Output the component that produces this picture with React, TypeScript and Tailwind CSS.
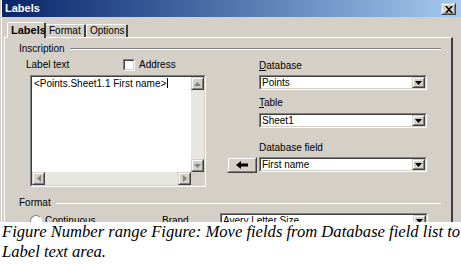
import React from "react";

const ui = { fontFamily: '"Liberation Sans", Arial, sans-serif' };

function Sunken({ className = "", children }: { className?: string; children?: React.ReactNode }) {
  return (
    <div className={`border border-t-[#808080] border-l-[#808080] border-b-white border-r-white ${className}`}>
      <div className="h-full w-full border border-t-[#404040] border-l-[#404040] border-b-[#d4d0c8] border-r-[#d4d0c8] bg-white">
        {children}
      </div>
    </div>
  );
}

function Raised({ className = "", children }: { className?: string; children?: React.ReactNode }) {
  return (
    <div className={`border border-t-[#d4d0c8] border-l-[#d4d0c8] border-b-[#404040] border-r-[#404040] bg-[#d4d0c8] ${className}`}>
      <div className="flex h-full w-full items-center justify-center border border-t-white border-l-white border-b-[#808080] border-r-[#808080]">
        {children}
      </div>
    </div>
  );
}

function DownTri() {
  return (
    <svg width="7" height="4" viewBox="0 0 7 4">
      <path d="M0 0h7L3.5 4z" fill="#000" />
    </svg>
  );
}

function Select({ value, className = "" }: { value: string; className?: string }) {
  return (
    <Sunken className={`h-[15px] ${className}`}>
      <div className="flex h-full items-center">
        <span className="flex-1 pl-[1px] text-[10px] leading-none text-black">{value}</span>
        <Raised className="h-full w-[13px]">
          <DownTri />
        </Raised>
      </div>
    </Sunken>
  );
}

function ScrollBtn({ dir }: { dir: "up" | "down" | "left" | "right" }) {
  const paths: Record<string, string> = {
    up: "M0 4h7L3.5 0z",
    down: "M0 0h7L3.5 4z",
    left: "M4 0v7L0 3.5z",
    right: "M0 0v7L4 3.5z",
  };
  const vert = dir === "up" || dir === "down";
  return (
    <Raised className={vert ? "h-[13px] w-full" : "h-full w-[13px]"}>
      <svg width={vert ? 7 : 4} height={vert ? 4 : 7} viewBox={vert ? "0 0 7 4" : "0 0 4 7"}>
        <path d={paths[dir]} fill="#808080" />
      </svg>
    </Raised>
  );
}

export default function App() {
  return (
    <div className="h-[265px] w-[461px] overflow-hidden bg-white">
      <div
        className="relative h-[222px] overflow-hidden border-l border-l-[#d4d0c8] bg-[#d4d0c8]"
        style={ui}
      >
        <div className="flex h-full flex-col border-l border-l-white">
          {/* Title bar */}
          <div className="relative flex h-[17px] shrink-0 items-center bg-gradient-to-r from-[#0a246a] to-[#a6caf0] pl-[3px]">
            <span className="text-[11px] font-bold leading-none text-white">Labels</span>
            <Raised className="absolute right-[5px] top-[3px] h-[12px] w-[15px]">
              <svg width="8" height="7" viewBox="0 0 8 7">
                <path d="M0 0h2l2 2.2L6 0h2L5 3.5 8 7H6L4 4.8 2 7H0l3-3.5z" fill="#000" />
              </svg>
            </Raised>
          </div>

          {/* Tabs */}
          <div className="flex h-[20px] shrink-0 items-end pl-[5px] pt-[5px]">
            <div className="relative z-10 -mb-px flex h-[16px] w-[39px] items-center rounded-t-[2px] border-l border-t border-r-2 border-l-white border-t-white border-r-[#404040] bg-[#d4d0c8] pl-[3px]">
              <span className="text-[11px] font-bold leading-none text-black">Labels</span>
            </div>
            <div className="flex h-[13px] w-[40px] items-center rounded-t-[2px] border-t border-r-2 border-t-white border-r-[#404040] pl-[3px]">
              <span className="text-[10px] leading-none text-black">Format</span>
            </div>
            <div className="flex h-[13px] w-[42px] items-center rounded-t-[2px] border-l border-t border-r-2 border-l-white border-t-white border-r-[#404040] pl-[3px]">
              <span className="text-[10px] leading-none text-black">Options</span>
            </div>
          </div>

          {/* Tab panel */}
          <div className="ml-[2px] mr-[8px] flex-1 border-l border-t border-r-2 border-l-white border-t-white border-r-[#404040]">
            <div className="px-[14px] pt-[6px]">
              {/* Inscription */}
              <div className="flex items-center gap-[5px]">
                <span className="text-[10px] leading-none text-black">Inscription</span>
                <div className="mr-[-4px] flex-1 border-t border-t-[#808080] border-b border-b-white" />
              </div>

              <div className="mt-[5px] flex">
                <div className="w-[198px] pl-[7px]">
                  <div className="flex h-[12px] items-center">
                    <span className="w-[97px] text-[10px] leading-none text-black">Label text</span>
                    <div className="h-[12px] w-[12px] border border-t-[#808080] border-l-[#808080] border-b-white border-r-white">
                      <div className="h-full w-full border border-t-[#404040] border-l-[#404040] border-b-[#d4d0c8] border-r-[#d4d0c8] bg-white" />
                    </div>
                    <span className="ml-[4px] text-[10px] leading-none text-black">Address</span>
                  </div>
                  <Sunken className="ml-[4px] mt-[4px] h-[112px] w-[176px]">
                    <div className="flex h-full flex-col">
                      <div className="flex flex-1">
                        <div className="flex-1 pl-[2px] pt-[1px] text-[10px] leading-[12px]">
                          <span className="text-black">&lt;Points.Sheet1.1 First name&gt;</span>
                          <span className="ml-[1px] inline-block h-[10px] w-px bg-black align-[-1px]" />
                        </div>
                        <div className="flex w-[13px] flex-col bg-[#e8e6e1]">
                          <ScrollBtn dir="up" />
                          <div className="flex-1" />
                          <ScrollBtn dir="down" />
                        </div>
                      </div>
                      <div className="flex h-[13px] bg-[#d4d0c8]">
                        <div className="flex flex-1 bg-[#e8e6e1]">
                          <ScrollBtn dir="left" />
                          <div className="flex-1" />
                          <ScrollBtn dir="right" />
                        </div>
                        <div className="w-[13px] bg-[#d4d0c8]" />
                      </div>
                    </div>
                  </Sunken>
                </div>

                <div className="flex w-[41px] flex-col justify-end pb-[14px]">
                  <Raised className="ml-[10px] h-[16px] w-[30px]">
                    <svg width="12" height="8" viewBox="0 0 12 8">
                      <path d="M0 4L5 0v2.5h7v3H5V8z" fill="#000" />
                    </svg>
                  </Raised>
                </div>

                <div className="flex w-[170px] flex-col pl-[1px]">
                  <span className="mt-[2px] text-[10px] leading-none text-black">
                    <span className="underline">D</span>atabase
                  </span>
                  <Select value="Points" className="mt-[4px] w-[168px]" />
                  <span className="mt-[8px] text-[10px] leading-none text-black">
                    <span className="underline">T</span>able
                  </span>
                  <Select value="Sheet1" className="mt-[5px] w-[168px]" />
                  <span className="mt-[15px] text-[10px] leading-none text-black">Database field</span>
                  <Select value="First name" className="mt-[4px] w-[168px]" />
                </div>
              </div>

              {/* Format */}
              <div className="mt-[11px] flex items-center gap-[5px]">
                <span className="text-[10px] leading-none text-black">Format</span>
                <div className="mr-[-4px] flex-1 border-t border-t-white" />
              </div>
              <div className="mt-[5px] flex items-center">
                <div className="ml-[11px] h-[12px] w-[12px] rounded-full border border-t-[#808080] border-l-[#808080] border-b-white border-r-white bg-white" />
                <span className="ml-[3px] w-[117px] text-[10px] leading-none text-black">Continuous</span>
                <span className="w-[58px] text-[10px] leading-none text-black">Brand</span>
                <Select value="Avery Letter Size" className="w-[208px]" />
              </div>
            </div>
          </div>
        </div>
      </div>

      {/* Caption */}
      <div
        className="whitespace-nowrap pl-[2px] text-[16.6px] italic leading-[20px] text-black"
        style={{ fontFamily: '"Liberation Serif", serif' }}
      >
        <div>Figure Number range Figure: Move fields from Database field list to</div>
        <div>Label text area.</div>
      </div>
    </div>
  );
}
